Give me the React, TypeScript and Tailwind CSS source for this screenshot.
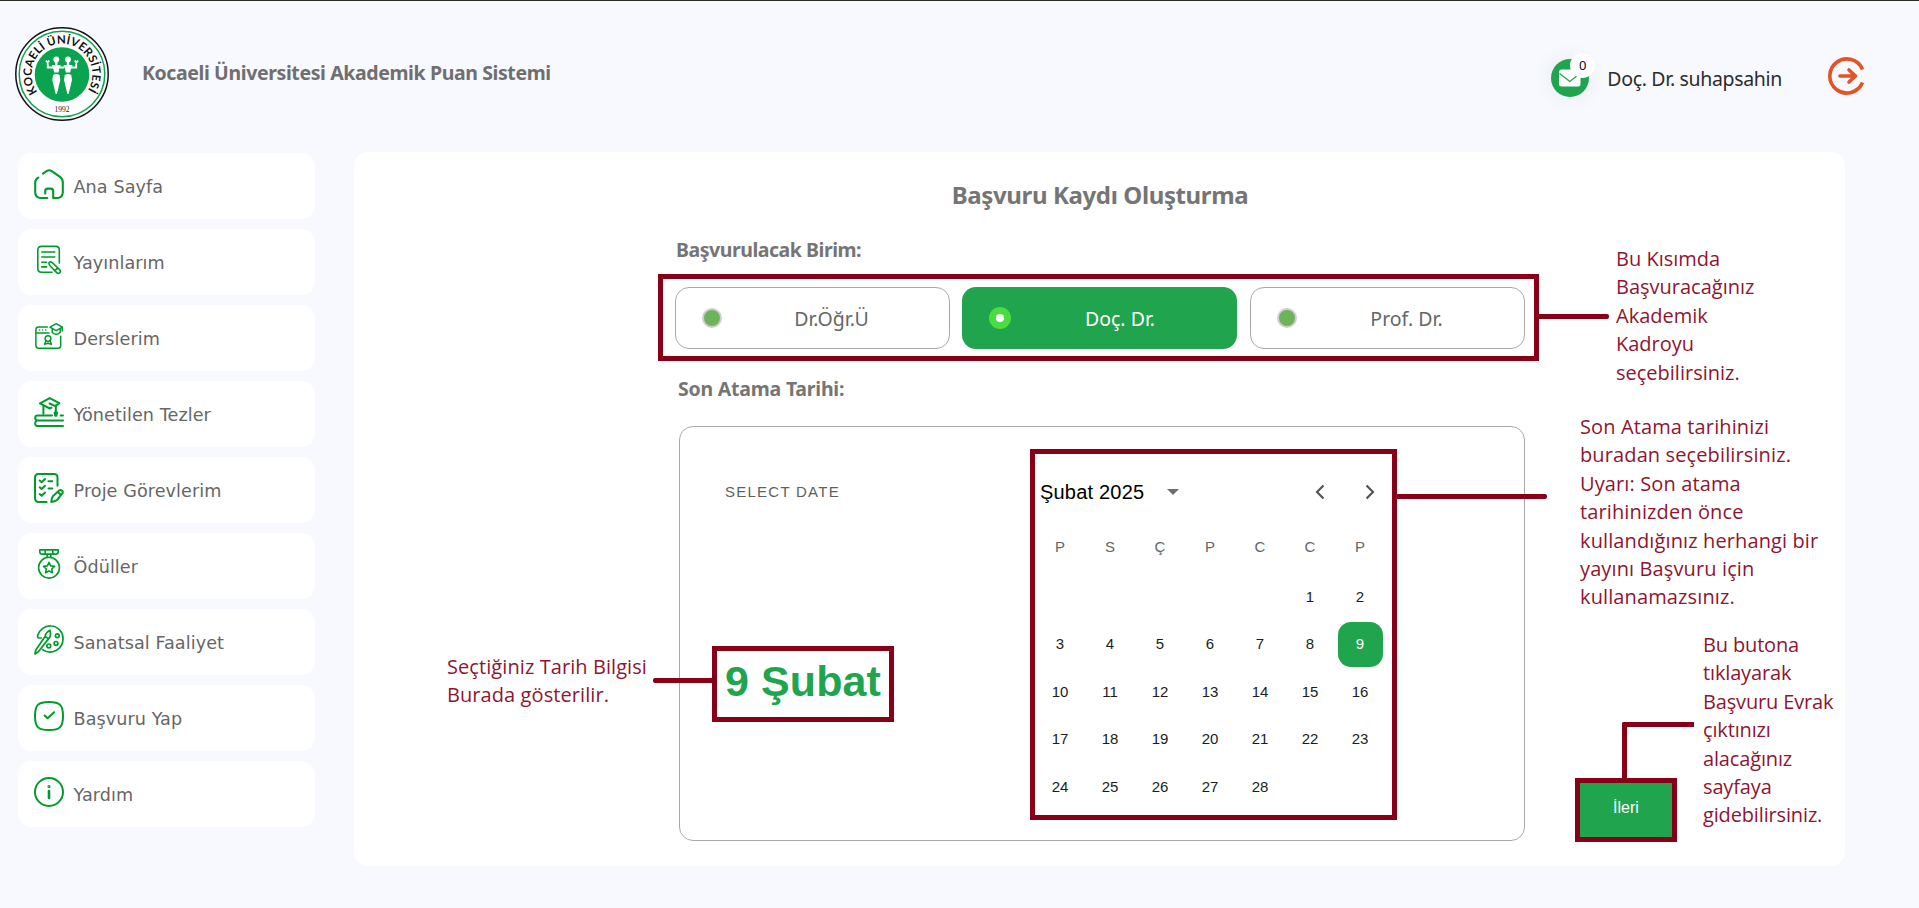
import React from "react";

const UI = "font-['Noto_Sans','Open_Sans',sans-serif]";
const NOTE_FONT = "font-['Open_Sans','Noto_Sans',sans-serif]";

type IconProps = { children: React.ReactNode; width?: number };

function Icon({ children, width = 2 }: IconProps) {
  return (
    <svg
      viewBox="0 0 30 30"
      className="size-[30px] shrink-0"
      fill="none"
      stroke="#009b2c"
      strokeWidth={width}
      strokeLinecap="round"
      strokeLinejoin="round"
    >
      {children}
    </svg>
  );
}

const HomeIcon = () => (
  <Icon width={2.1}>
    <path d="M4.3 8.6C2 9.8 1.2 11 1.2 13.5V23q0 6 6 6h6" />
    <path d="M9 4.6 12.6 2.1q2.6-1.8 5.2 0L26 7.8q2.8 2 2.8 5.4V23q0 6-6 6h-3.6v-6.8q0-2.6-2.6-2.6h-2.8q-2.6 0-2.6 2.6v2.4" />
  </Icon>
);

const PaperIcon = () => (
  <Icon width={1.6}>
    <path d="M18 27.2H7.4q-3.6 0-3.6-3.6V5q0-3.6 3.6-3.6h14.3q3.6 0 3.6 3.6v13" />
    <path d="M7.8 7h13M7.8 12h13M7.8 17.2h4.8M7.8 21.9h4.8" />
    <path d="M15.3 19.6q-1-2.2.6-2.6 1.2-.4 2.6.8l7 6.8q1.6 1.8.2 3.2-1.6 1.2-3.2-.4l-6.2-6.4zM20.6 25.8l3.2-3" />
  </Icon>
);

const CourseIcon = () => (
  <Icon width={1.5}>
    <path d="M13.3 6H4.6Q1.9 6 1.9 8.7v15.8q0 2.8 2.8 2.8h19.2q2.8 0 2.8-2.8v-9.2M1.9 11.9h13" />
    <path d="M5.6 9h.1M8.6 9h.1M11.6 9h.1" />
    <path d="M22.2 2.7l6.2 3.5-6.2 3.5L16 6.2z" />
    <path d="M18.2 8v3.5q4 3.6 8 0V8M28.2 6.5v3.5" />
    <circle cx="14" cy="17.6" r="2.9" />
    <path d="M12 19.8 10.6 23.3l3.4-1.1 3.4 1.1L16 19.8" />
  </Icon>
);

const ThesisIcon = () => (
  <Icon>
    <path d="M17.5 10.7l-1.8.8L6 6.4l9.700-5.300L25.300 6.200 21.800 8.600" />
    <path d="M15.500 6.500l6.300 2.800v6.500M9.400 9v8" />
    <path d="M20.600 15.500h2.400l-.6 3.200h-1.200z" fill="#009b2c" />
    <path d="M18 18.600H3.600Q1.200 18.600 1.200 21t2.400 2.500H29M26.600 18.600H29M3.600 23.500q-2.400 0-2.400 2.800T3.600 29H29" />
  </Icon>
);

const ProjectIcon = () => (
  <Icon>
    <path d="M12.600 29H5q-4 0-4-4V4.500Q1 1 4.500 1H20q3.500 0 3.500 3.500v8.300" />
    <path d="M5.700 7.500l1.900 1.700L11 6M5.700 14.300l1.900 1.700 3.400-3.200M5.700 21.100l1.900 1.700 3.400-3.200M14.500 8.300h3.800M14.500 15.600h3.800" />
    <path d="M17.300 28.900q.2-4 1.800-6l6-5.300q1.600-1.200 3 .1 1.300 1.400.1 3l-5.200 6.300q-2 1.600-5.700 1.900zM24.400 19.500l2 1.900" />
  </Icon>
);

const MedalIcon = () => (
  <Icon width={1.6}>
    <path d="M5.800.9h18.400v2q0 2.200-2.400 2.200H8.200Q5.800 5.100 5.800 2.900zM11.200 1v4M18.800 1v4M13.200 5.200v2.600M16.800 5.200v2.600" />
    <circle cx="15" cy="18.700" r="10.400" />
    <path d="M15 13.400l1.700 3.500 3.800.5-2.800 2.600.7 3.800-3.400-1.900-3.400 1.900.7-3.800-2.800-2.600 3.800-.5z" />
  </Icon>
);

const ArtIcon = () => (
  <Icon width={1.7}>
    <path d="M7.200 13H5.200Q3.300 12.800 3.700 10.500A13 13 0 0 1 17 1a12.400 12.400 0 0 1 12 13A13 13 0 0 1 8.500 24.600" />
    <path d="M15.900 5.200q-4.500 2.600-4.800 6.300L1.600 25.300 1 29l3.300-2.300 10.200-12.800q3.200-3 1.400-8.700zM11.200 11.400l3.200 2.300" />
    <circle cx="23.300" cy="10.700" r="1.900" />
    <circle cx="22" cy="18.400" r="1.900" />
    <circle cx="14.800" cy="20.900" r="1.900" />
  </Icon>
);

const ApplyIcon = () => (
  <Icon>
    <path d="M15 1C26 1 29 4 29 15s-3 14-14 14S1 26 1 15 4 1 15 1z" />
    <path d="M10.600 14.500l3 2.700 6.500-6" />
  </Icon>
);

const HelpIcon = () => (
  <Icon>
    <circle cx="15" cy="15" r="14" />
    <path d="M15 14v7" strokeWidth="2.600" />
    <circle cx="15" cy="9.500" r=".6" strokeWidth="2" />
  </Icon>
);

const MENU: { label: string; icon: () => React.ReactElement }[] = [
  { label: "Ana Sayfa", icon: HomeIcon },
  { label: "Yayınlarım", icon: PaperIcon },
  { label: "Derslerim", icon: CourseIcon },
  { label: "Yönetilen Tezler", icon: ThesisIcon },
  { label: "Proje Görevlerim", icon: ProjectIcon },
  { label: "Ödüller", icon: MedalIcon },
  { label: "Sanatsal Faaliyet", icon: ArtIcon },
  { label: "Başvuru Yap", icon: ApplyIcon },
  { label: "Yardım", icon: HelpIcon },
];

function Figure() {
  return (
    <g fill="#fff">
      <circle cx="0" cy="-15.500" r="2.900" />
      <path d="M-1.200-13.500h2.400v4h-2.400z" />
      <path d="M-4.500-10h9L2.800-5.500 2.200-2.500h-4.400L-2.800-5.500z" />
      <path d="M-3.300 0Q0-2 3.300 0L4 5 .6 19H-.6L-4 5z" />
    </g>
  );
}

function Logo() {
  return (
    <svg viewBox="0 0 94 94" className="size-[94px]">
      <defs>
        <path id="ring" d="M22.400 65A30.400 30.400 0 1 1 71.600 65" />
      </defs>
      <circle cx="47" cy="47" r="46.200" fill="#fff" stroke="#111" strokeWidth="1.500" />
      <circle cx="47" cy="47" r="42.800" fill="none" stroke="#0aa34f" strokeWidth="1.500" />
      <circle cx="47" cy="47.500" r="27.300" fill="#0aa34f" />
      <text fontFamily="Lato, sans-serif" fontSize="11.500" fontWeight="700" fill="#111">
        <textPath href="#ring" textLength="131" lengthAdjust="spacing">
          KOCAELİ ÜNİVERSİTESİ
        </textPath>
      </text>
      <g transform="translate(41.300 48)">
        <Figure />
      </g>
      <g transform="translate(53 48)">
        <Figure />
      </g>
      <path
        d="M38 40.500h-5.200v-4M56 40.500h5.200v-4M31 33.500l1.600 2.200 1.600-2.200M59.800 33.500l1.600 2.200 1.600-2.200M45 40.500h4"
        fill="none"
        stroke="#fff"
        strokeWidth="1.900"
      />
      <text x="47" y="84.500" textAnchor="middle" fontFamily="Liberation Serif, serif" fontSize="7.500" fill="#222">
        1992
      </text>
    </svg>
  );
}

function Header() {
  return (
    <header className="flex h-[151px] items-start justify-between pl-[15px] pr-[54px]">
      <div className="flex items-center gap-[33px] pt-[26px]">
        <Logo />
        <h1 className={`${UI} -mt-[2px] text-[19.500px] font-bold leading-none tracking-[-0.390px] text-[#6f6f6f]`}>
          Kocaeli Üniversitesi Akademik Puan Sistemi
        </h1>
      </div>
      <div className="flex items-center pt-[53px]">
        <div className="relative mr-[18px] mt-[5px] size-[38px] rounded-full bg-[#20a54e] shadow-[0_0_22px_rgba(0,0,0,0.07)]">
          <svg viewBox="0 0 38 38" className="size-[38px]">
            <rect x="8" y="10.500" width="21.500" height="17" rx="2.500" fill="#fff" />
            <path d="M8.500 14.500 18.800 22.500 29 14.500" fill="none" stroke="#20a54e" strokeWidth="1.200" />
          </svg>
          <span
            className={`${UI} absolute -right-[6px] -top-[6px] flex size-[25px] items-center justify-center rounded-full bg-white pt-[1px] text-[13px] text-[#0a0a33]`}
          >
            0
          </span>
        </div>
        <span className={`${UI} mr-[46px] mt-[6px] text-[19.500px] leading-none tracking-[-0.330px] text-[#2c2c2c]`}>
          Doç. Dr. suhapsahin
        </span>
        <svg
          viewBox="0 0 37 38"
          className="h-[38px] w-[37px]"
          fill="none"
          stroke="#e35325"
          strokeLinecap="round"
          strokeLinejoin="round"
        >
          <path d="M34.500 12.500A17 17 0 1 0 34.500 25.500" strokeWidth="3.600" strokeLinecap="butt" />
          <path d="M12 19h15M21 13l6.500 6-6.500 6" strokeWidth="3.600" />
        </svg>
      </div>
    </header>
  );
}

function Sidebar() {
  return (
    <nav className="flex w-[297px] flex-col gap-[10px] pt-[1px]">
      {MENU.map(({ label, icon: Glyph }) => (
        <a key={label} className="flex h-[66px] items-start gap-[9.500px] rounded-[14px] bg-white px-4 pt-4">
          <Glyph />
          <span className="pt-[7px] font-['DejaVu_Sans',sans-serif] text-[17.600px] leading-[22px] tracking-[0.080px] text-[#666]">
            {label}
          </span>
        </a>
      ))}
    </nav>
  );
}

const RANKS = ["Dr.Öğr.Ü", "Doç. Dr.", "Prof. Dr."];

function RankPicker() {
  return (
    <div className="flex h-[87px] w-[881px] gap-[12.500px] border-[5px] border-[#880015] pl-[11.500px] pt-[8px]">
      {RANKS.map((rank, i) =>
        i === 1 ? (
          <div key={rank} className="flex h-[62px] w-[275px] items-center rounded-[14px] bg-[#20a54e] pl-[27px]">
            <span className="flex size-[22px] items-center justify-center rounded-full bg-[#4bdc42]">
              <span className="size-[8px] rounded-full bg-white" />
            </span>
            <span className={`${UI} flex-1 pr-[8px] pt-[2px] text-center text-[19.500px] text-white`}>{rank}</span>
          </div>
        ) : (
          <div
            key={rank}
            className="flex h-[62px] w-[275px] items-center rounded-[14px] border border-[#a9a9a9] pl-[26px]"
          >
            <span className="size-[20px] rounded-full border-2 border-[#cfcfcf] bg-[#6db35c]" />
            <span className={`${UI} flex-1 pr-[7px] pt-[2px] text-center text-[19.500px] text-[#666]`}>{rank}</span>
          </div>
        ),
      )}
    </div>
  );
}

const WEEKDAYS = ["P", "S", "Ç", "P", "C", "C", "P"];
const DAYS: (number | null)[] = [null, null, null, null, null, ...Array.from({ length: 28 }, (_, i) => i + 1)];

function Calendar() {
  return (
    <div className="h-[371px] w-[367px] border-[5px] border-[#880015] font-['Liberation_Sans',Arial,sans-serif]">
      <div className="flex h-[76px] items-center pl-[5px] pr-[17px]">
        <span className="-mt-[1px] text-[20px] tracking-[0.200px] text-black">Şubat 2025</span>
        <svg viewBox="0 0 12 6" className="ml-[23px] h-[6px] w-[12px]">
          <path d="M0 0h12L6 6z" fill="#6e6e6e" />
        </svg>
        <svg viewBox="0 0 60 16" className="ml-auto h-[16px] w-[60px]" fill="none" stroke="#555" strokeWidth="2.200">
          <path d="M8.500 1.500 2 8l6.500 6.500M51.500 1.500 58 8l-6.500 6.500" />
        </svg>
      </div>
      <div className="grid grid-cols-[repeat(7,50px)]">
        {WEEKDAYS.map((d, i) => (
          <span key={i} className="flex h-[34px] items-center justify-center text-[15px] text-[#666]">
            {d}
          </span>
        ))}
      </div>
      <div className="grid auto-rows-[47.500px] grid-cols-[repeat(7,50px)] pt-[9px]">
        {DAYS.map((d, i) => (
          <span key={i} className="flex items-center justify-center text-[15px]">
            {d === 9 ? (
              <span className="flex size-[45px] items-center justify-center rounded-[13px] bg-[#20a54e] text-white">9</span>
            ) : (
              <span className="text-[#1c1c1c]">{d}</span>
            )}
          </span>
        ))}
      </div>
    </div>
  );
}

function DatePicker() {
  return (
    <div className="flex h-[415px] w-[846px] rounded-[14px] border border-[#a9a9a9] font-['Liberation_Sans',Arial,sans-serif]">
      <div className="w-[350px] pl-[32px] pt-[56px]">
        <p className="pl-[13px] text-[15px] leading-[18px] tracking-[1.250px] text-[#5f5f5f]">SELECT DATE</p>
        <div className="mt-[145px] flex h-[76px] w-[182px] items-center border-[5px] border-[#880015] pl-[8px] text-[43px] font-bold leading-none text-[#20a54e]">
          <span className="-mt-[6px] whitespace-nowrap tracking-[0.100px]">9 Şubat</span>
        </div>
      </div>
      <div className="pt-[22px]">
        <Calendar />
      </div>
    </div>
  );
}

function Note({ lines, className }: { lines: string[]; className: string }) {
  return (
    <div className={`${NOTE_FONT} absolute whitespace-nowrap text-[20px] leading-[28.400px] text-[#8f1530] ${className}`}>
      {lines.map((line) => (
        <div key={line}>{line}</div>
      ))}
    </div>
  );
}

export default function App() {
  return (
    <div className="relative h-[908px] w-[1919px] overflow-hidden border-t border-[#2b2b23] bg-[#f8f9fe]">
      <Header />
      <div className="flex gap-[39px] pl-[18px]">
        <Sidebar />
        <main className="flex h-[714px] w-[1491px] rounded-[14px] bg-white">
          <div className="ml-[304px] w-[881px]">
            <h2
              className={`${UI} pt-[30px] pl-[3px] text-center text-[24px] font-bold leading-[26px] tracking-[-0.380px] text-[#757575]`}
            >
              Başvuru Kaydı Oluşturma
            </h2>
            <h3
              className={`${UI} mt-[30px] pl-[18px] text-[19.500px] font-bold leading-[24px] tracking-[-0.460px] text-[#757575]`}
            >
              Başvurulacak Birim:
            </h3>
            <div className="mt-[12px]">
              <RankPicker />
            </div>
            <h3
              className={`${UI} mt-[16px] pl-[20px] text-[19.500px] font-bold leading-[24px] tracking-[-0.220px] text-[#757575]`}
            >
              Son Atama Tarihi:
            </h3>
            <div className="mt-[25px] pl-[21px]">
              <DatePicker />
            </div>
          </div>
          <button className="ml-[36px] mt-[626px] h-[64px] w-[102px] border-[5px] border-[#880015] bg-[#20a54e] pb-[4px] font-['Liberation_Sans',Arial,sans-serif] text-[16px] text-white">
            İleri
          </button>
        </main>
      </div>

      <div className="absolute left-[653px] top-[677px] h-[5px] w-[59px] rounded-l-[2px] bg-[#880015]" />
      <div className="absolute left-[1539px] top-[313px] h-[5px] w-[70px] rounded-r-[2px] bg-[#880015]" />
      <div className="absolute left-[1397px] top-[493px] h-[5px] w-[150px] rounded-r-[2px] bg-[#880015]" />
      <div className="absolute left-[1622px] top-[721px] h-[56px] w-[72px] rounded-tl-[2px] border-l-[5px] border-t-[5px] border-[#880015]" />

      <Note className="left-[447px] top-[652px] tracking-[0.080px]" lines={["Seçtiğiniz Tarih Bilgisi", "Burada gösterilir."]} />
      <Note
        className="left-[1616px] top-[244px]"
        lines={["Bu Kısımda", "Başvuracağınız", "Akademik", "Kadroyu", "seçebilirsiniz."]}
      />
      <Note
        className="left-[1580px] top-[412px] tracking-[0.120px]"
        lines={[
          "Son Atama tarihinizi",
          "buradan seçebilirsiniz.",
          "Uyarı: Son atama",
          "tarihinizden önce",
          "kullandığınız herhangi bir",
          "yayını Başvuru için",
          "kullanamazsınız.",
        ]}
      />
      <Note
        className="left-[1703px] top-[630px] tracking-[-0.150px]"
        lines={["Bu butona", "tıklayarak", "Başvuru Evrak", "çıktınızı", "alacağınız", "sayfaya", "gidebilirsiniz."]}
      />
    </div>
  );
}
